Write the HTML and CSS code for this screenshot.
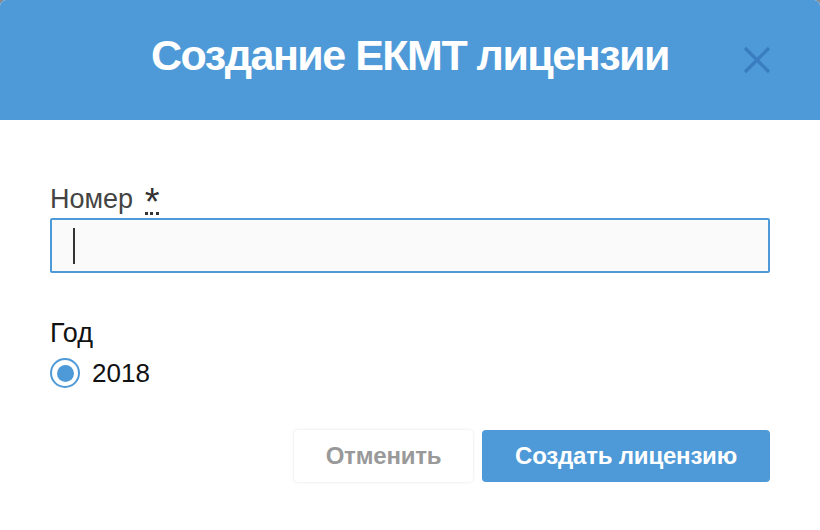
FILE: index.html
```html
<!DOCTYPE html>
<html lang="ru">
<head>
<meta charset="utf-8">
<link rel="stylesheet" href="styles.css">
</head>
<body>
<div class="dialog">
  <div class="header">
    <h1 class="title">Создание ЕКМТ лицензии</h1>
    <button class="close" aria-label="Закрыть">
      <svg width="28" height="28" viewBox="0 0 28 28"><path d="M2 2 L26 26 M26 2 L2 26" stroke="#3a7cc0" stroke-width="3.2" fill="none"/></svg>
    </button>
  </div>
  <div class="body">
    <div class="field">
      <label class="label">Номер <abbr class="req" title="обязательно">*</abbr></label>
      <div class="input"><span class="caret"></span></div>
    </div>
    <div class="field year">
      <div class="label dark">Год</div>
      <label class="radio"><span class="radio-circle"><span class="radio-dot"></span></span><span class="radio-text">2018</span></label>
    </div>
    <div class="actions">
      <button class="btn cancel">Отменить</button>
      <button class="btn primary">Создать лицензию</button>
    </div>
  </div>
</div>
</body>
</html>
```
FILE: styles.css
```css
html, body { margin: 0; padding: 0; }
body {
  background: #8a8a8a;
  width: 820px;
  height: 530px;
  overflow: hidden;
  font-family: "Liberation Sans", Arial, sans-serif;
}
.dialog {
  width: 820px;
  height: 530px;
  background: #fff;
  border-radius: 6px 6px 0 0;
  overflow: hidden;
}
.header {
  height: 120px;
  background: #4e9ad8;
  position: relative;
  display: flex;
  align-items: center;
  justify-content: center;
}
.title {
  margin: 0;
  color: #fff;
  font-size: 43px;
  font-weight: bold;
  letter-spacing: -1.5px;
  padding-bottom: 10px;
}
.close {
  position: absolute;
  right: 49px;
  top: 46px;
  width: 28px;
  height: 28px;
  padding: 0;
  border: 0;
  background: none;
}
.close svg { display: block; }
.body {
  padding: 62px 50px 0 50px;
}
.field { display: flex; flex-direction: column; }
.label {
  font-size: 27px;
  color: #444;
  line-height: 34px;
  height: 36px;
}
.label.dark { color: #111; font-size: 27px; height: 40px; }
.req {
  text-decoration: none;
  border-bottom: 3px dotted #333;
  color: #333;
  font-size: 38px;
  line-height: 30px;
  display: inline-block;
  height: 25px;
  vertical-align: top;
  margin-left: 4px;
  margin-top: 5px;
}
.input {
  height: 51px;
  border: 2px solid #4e9ad8;
  border-radius: 2px;
  background: #fafafa;
  display: flex;
  align-items: center;
  padding-left: 21px;
}
.caret {
  width: 2px;
  height: 36px;
  background: #333;
}
.year { margin-top: 43px; }
.radio {
  display: flex;
  align-items: center;
  gap: 12px;
  height: 34px;
}
.radio-circle {
  width: 26px;
  height: 26px;
  border: 2px solid #4e9ad8;
  border-radius: 50%;
  display: flex;
  align-items: center;
  justify-content: center;
}
.radio-dot {
  width: 17px;
  height: 17px;
  border-radius: 50%;
  background: #4e9ad8;
}
.radio-text { font-size: 26px; color: #111; }
.actions {
  display: flex;
  justify-content: flex-end;
  gap: 9px;
  margin-top: 40px;
}
.btn {
  height: 52px;
  border: 0;
  border-radius: 4px;
  font-family: "Liberation Sans", Arial, sans-serif;
  font-weight: bold;
  font-size: 24px;
  letter-spacing: -0.2px;
}
.cancel {
  width: 179px;
  background: #fff;
  color: #999;
  box-shadow: 0 0 3px rgba(0,0,0,0.12);
}
.primary {
  width: 288px;
  background: #4e9ad8;
  color: #fff;
}
```
